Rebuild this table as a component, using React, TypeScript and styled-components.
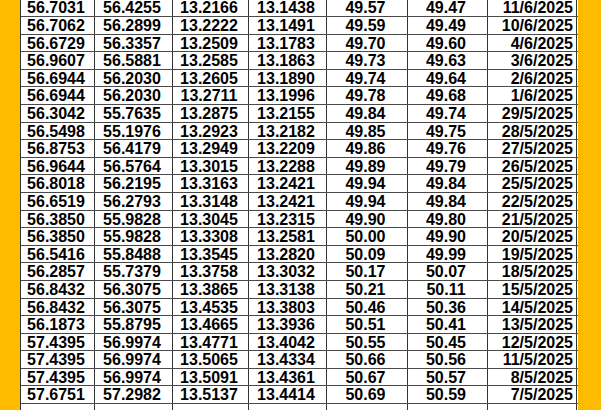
import React from "react";
import styled, { createGlobalStyle } from "styled-components";

const GlobalStyle = createGlobalStyle`
  html, body {
    margin: 0;
    padding: 0;
    background: #ffbb00;
    overflow: hidden;
  }
`;

const Page = styled.div`
  width: 601px;
  height: 410px;
  overflow: hidden;
  background: #ffbb00;
  padding-left: 20px;
  box-sizing: border-box;
`;

const Table = styled.div`
  width: 557px;
  margin-top: -0.6px;
  background: #fff;
  border-left: 1px solid #333;
  display: grid;
  grid-auto-rows: 17.6px;
  font-family: "Liberation Sans", Arial, sans-serif;
  font-weight: bold;
  font-size: 16px;
  color: #000;
`;

const Row = styled.div`
  display: grid;
  grid-template-columns: 74px 78px 76px 78px 81px 80px 89px;
  border-bottom: 1px solid #4a4a4a;
  box-sizing: border-box;
`;

const Cell = styled.div<{ $align?: "center" | "right" }>`
  border-right: 1px solid #333;
  text-align: ${(p) => p.$align ?? "center"};
  padding: 1px ${(p) => (p.$align === "right" ? "3px" : "3px")} 0 0;
  line-height: 16.6px;
  white-space: nowrap;
  overflow: hidden;
`;

const rows: string[][] = [
  ["56.7031", "56.4255", "13.2166", "13.1438", "49.57", "49.47", "11/6/2025"],
  ["56.7062", "56.2899", "13.2222", "13.1491", "49.59", "49.49", "10/6/2025"],
  ["56.6729", "56.3357", "13.2509", "13.1783", "49.70", "49.60", "4/6/2025"],
  ["56.9607", "56.5881", "13.2585", "13.1863", "49.73", "49.63", "3/6/2025"],
  ["56.6944", "56.2030", "13.2605", "13.1890", "49.74", "49.64", "2/6/2025"],
  ["56.6944", "56.2030", "13.2711", "13.1996", "49.78", "49.68", "1/6/2025"],
  ["56.3042", "55.7635", "13.2875", "13.2155", "49.84", "49.74", "29/5/2025"],
  ["56.5498", "55.1976", "13.2923", "13.2182", "49.85", "49.75", "28/5/2025"],
  ["56.8753", "56.4179", "13.2949", "13.2209", "49.86", "49.76", "27/5/2025"],
  ["56.9644", "56.5764", "13.3015", "13.2288", "49.89", "49.79", "26/5/2025"],
  ["56.8018", "56.2195", "13.3163", "13.2421", "49.94", "49.84", "25/5/2025"],
  ["56.6519", "56.2793", "13.3148", "13.2421", "49.94", "49.84", "22/5/2025"],
  ["56.3850", "55.9828", "13.3045", "13.2315", "49.90", "49.80", "21/5/2025"],
  ["56.3850", "55.9828", "13.3308", "13.2581", "50.00", "49.90", "20/5/2025"],
  ["56.5416", "55.8488", "13.3545", "13.2820", "50.09", "49.99", "19/5/2025"],
  ["56.2857", "55.7379", "13.3758", "13.3032", "50.17", "50.07", "18/5/2025"],
  ["56.8432", "56.3075", "13.3865", "13.3138", "50.21", "50.11", "15/5/2025"],
  ["56.8432", "56.3075", "13.4535", "13.3803", "50.46", "50.36", "14/5/2025"],
  ["56.1873", "55.8795", "13.4665", "13.3936", "50.51", "50.41", "13/5/2025"],
  ["57.4395", "56.9974", "13.4771", "13.4042", "50.55", "50.45", "12/5/2025"],
  ["57.4395", "56.9974", "13.5065", "13.4334", "50.66", "50.56", "11/5/2025"],
  ["57.4395", "56.9974", "13.5091", "13.4361", "50.67", "50.57", "8/5/2025"],
  ["57.6751", "57.2982", "13.5137", "13.4414", "50.69", "50.59", "7/5/2025"],
  ["", "", "", "", "", "", ""],
];

export default function App() {
  return (
    <>
      <GlobalStyle />
      <Page>
        <Table>
          {rows.map((r, i) => (
            <Row key={i}>
              {r.map((v, j) => (
                <Cell key={j} $align={j === 6 ? "right" : "center"}>
                  {v}
                </Cell>
              ))}
            </Row>
          ))}
        </Table>
      </Page>
    </>
  );
}
